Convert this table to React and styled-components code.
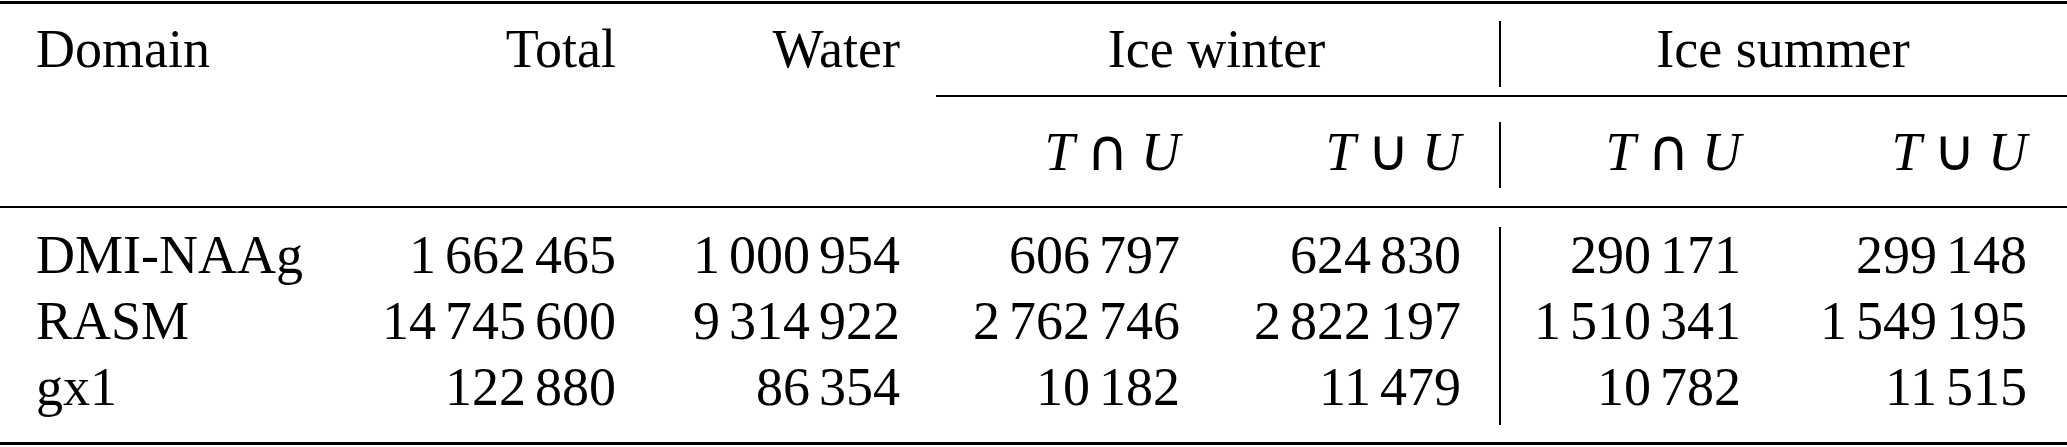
import React from "react"
import styled, { createGlobalStyle } from "styled-components"

const GlobalStyle = createGlobalStyle`
  html,
  body {
    margin: 0;
    padding: 0;
    background: #fff;
  }

  body {
    font-family: "Liberation Serif", serif;
    color: #000;
  }
`

const rows = [
  {
    domain: "DMI-NAAg",
    total: "1662465",
    water: "1000954",
    winter: ["606797", "624830"],
    summer: ["290171", "299148"],
  },
  {
    domain: "RASM",
    total: "14745600",
    water: "9314922",
    winter: ["2762746", "2822197"],
    summer: ["1510341", "1549195"],
  },
  {
    domain: "gx1",
    total: "122880",
    water: "86354",
    winter: ["10182", "11479"],
    summer: ["10782", "11515"],
  },
]

// split digits in groups of three, from the right
const groups = value => {
  const out = []
  for (let end = value.length; end > 0; end -= 3) {
    out.unshift(value.slice(Math.max(0, end - 3), end))
  }
  return out
}

const Num = ({ value }) => (
  <>
    {groups(value).map((g, i) => (
      <React.Fragment key={i}>
        {i > 0 && <Thin />}
        {g}
      </React.Fragment>
    ))}
  </>
)

const SetOp = ({ op }) => (
  <>
    <Var>T</Var>
    <Op>{op}</Op>
    <Var>U</Var>
  </>
)

const App = () => {
  return (
    <>
      <GlobalStyle />
      <Table>
        <Rule $weight={3} $above={1} $below={17} />

        <Cell $col="1" $align="left">Domain</Cell>
        <Cell $col="2">Total</Cell>
        <Cell $col="3">Water</Cell>
        <Cell $col="4 / 6" $align="center">Ice winter</Cell>
        <Divider />
        <Cell $col="7 / 9" $align="center">Ice summer</Cell>

        <Rule $from={4} $weight={2} $above={8} $below={25} />

        <Cell $col="4"><SetOp op="∩" /></Cell>
        <Cell $col="5"><SetOp op="∪" /></Cell>
        <Divider />
        <Cell $col="7"><SetOp op="∩" /></Cell>
        <Cell $col="8"><SetOp op="∪" /></Cell>

        <Rule $weight={2} $above={18} $below={19} />

        {rows.map(row => (
          <React.Fragment key={row.domain}>
            <Cell $col="1" $align="left">{row.domain}</Cell>
            <Cell $col="2"><Num value={row.total} /></Cell>
            <Cell $col="3"><Num value={row.water} /></Cell>
            <Cell $col="4"><Num value={row.winter[0]} /></Cell>
            <Cell $col="5"><Num value={row.winter[1]} /></Cell>
            <Divider />
            <Cell $col="7"><Num value={row.summer[0]} /></Cell>
            <Cell $col="8"><Num value={row.summer[1]} /></Cell>
          </React.Fragment>
        ))}

        <Rule $weight={3} $above={17} $below={0} />
      </Table>
    </>
  )
}

const Table = styled.div`
  display: grid;
  grid-template-columns: 300px 352px 284px 280px 281px 6px 274px 286px 1fr;
  width: 2067px;
  font-family: "Liberation Serif", serif;
  font-size: 54px;
  color: #000;
`

const Rule = styled.div`
  grid-column: ${p => p.$from || 1} / -1;
  height: ${p => p.$weight}px;
  margin: ${p => p.$above}px 0 ${p => p.$below}px;
  background: #000;
`

const Cell = styled.div`
  grid-column: ${p => p.$col};
  height: 66px;
  line-height: 56px;
  white-space: nowrap;
  text-align: ${p => p.$align || "right"};
  padding: ${p =>
    p.$align === "left" ? "0 0 0 36px" : p.$align === "center" ? "0 36px" : "0 36px 0 0"};
`

const Divider = styled.div`
  grid-column: 6;
  justify-self: center;
  width: 2px;
  background: #000;
`

const Thin = styled.span`
  display: inline-block;
  width: 0.1667em;
`

const Var = styled.i`
  font-family: "Liberation Serif", serif;
  font-style: italic;
`

const Op = styled.span`
  font-family: "DejaVu Sans", sans-serif;
  font-style: normal;
  font-size: 58px;
  margin: 0 12px;
`

export default App
